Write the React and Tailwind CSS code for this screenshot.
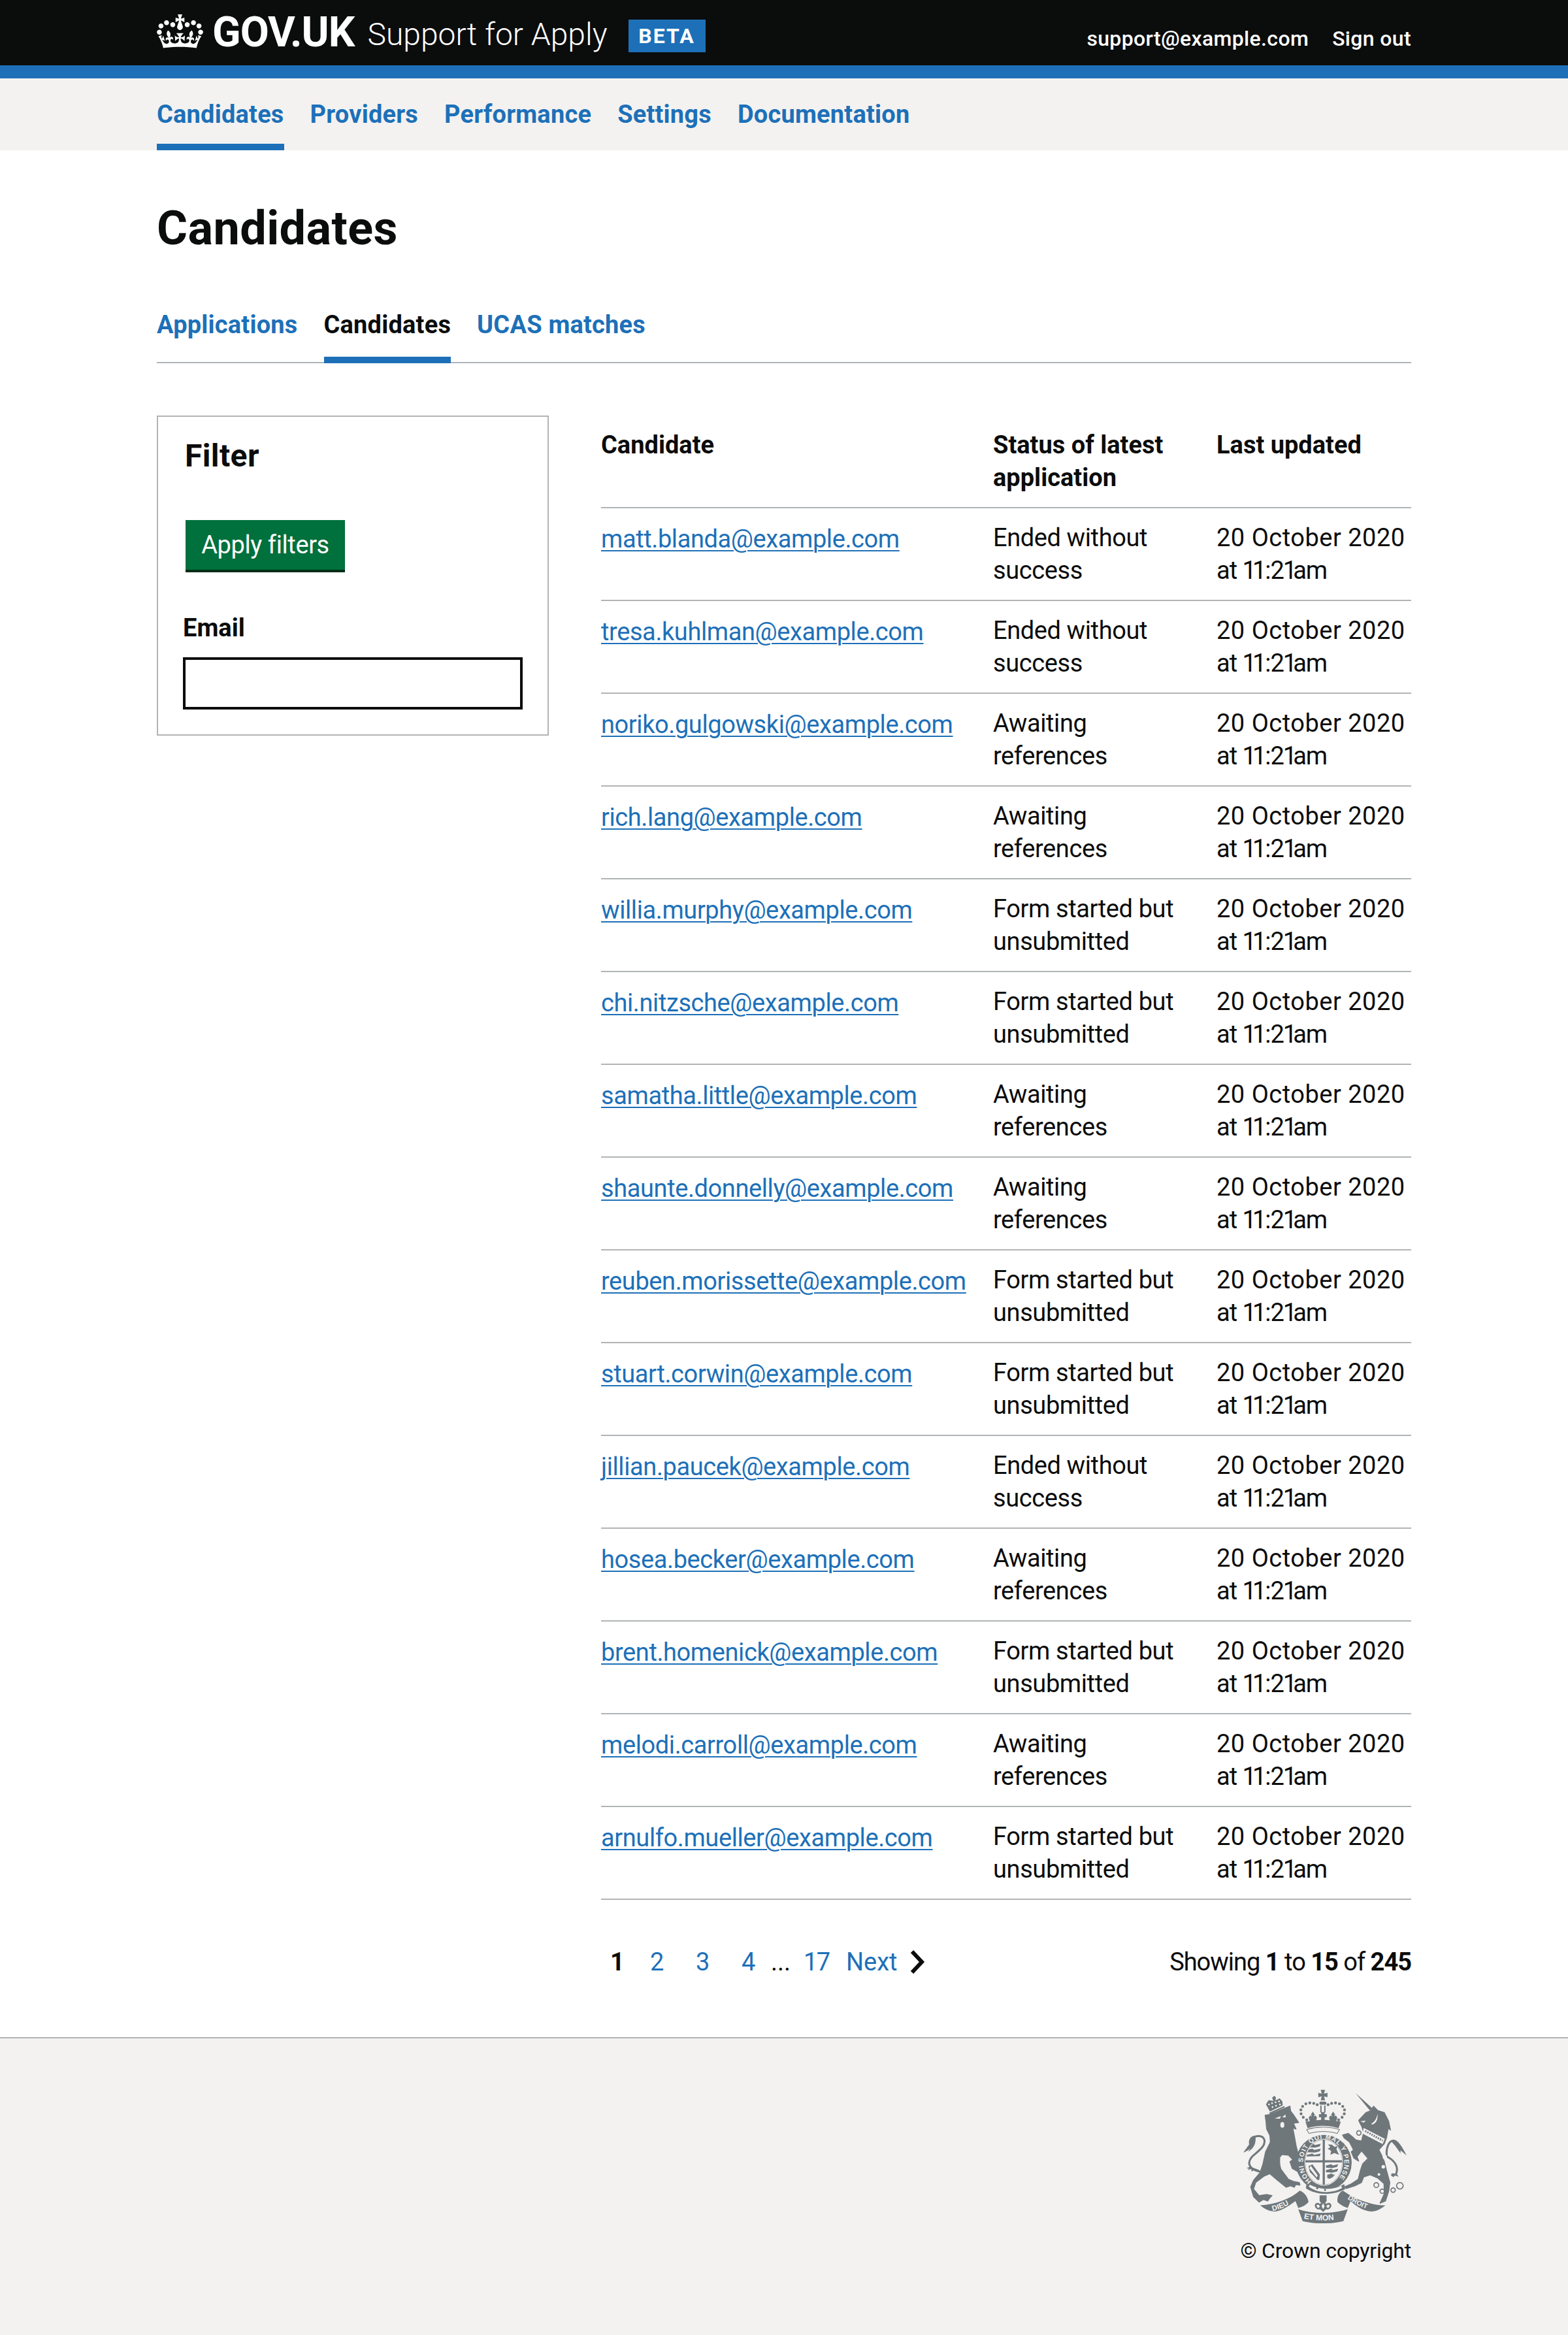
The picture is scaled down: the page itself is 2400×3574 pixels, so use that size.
import React from 'react';

const rows = [
  ['matt.blanda@example.com', 'Ended without', 'success'],
  ['tresa.kuhlman@example.com', 'Ended without', 'success'],
  ['noriko.gulgowski@example.com', 'Awaiting', 'references'],
  ['rich.lang@example.com', 'Awaiting', 'references'],
  ['willia.murphy@example.com', 'Form started but', 'unsubmitted'],
  ['chi.nitzsche@example.com', 'Form started but', 'unsubmitted'],
  ['samatha.little@example.com', 'Awaiting', 'references'],
  ['shaunte.donnelly@example.com', 'Awaiting', 'references'],
  ['reuben.morissette@example.com', 'Form started but', 'unsubmitted'],
  ['stuart.corwin@example.com', 'Form started but', 'unsubmitted'],
  ['jillian.paucek@example.com', 'Ended without', 'success'],
  ['hosea.becker@example.com', 'Awaiting', 'references'],
  ['brent.homenick@example.com', 'Form started but', 'unsubmitted'],
  ['melodi.carroll@example.com', 'Awaiting', 'references'],
  ['arnulfo.mueller@example.com', 'Form started but', 'unsubmitted'],
];

const CrownLogo = () => (
  <svg viewBox="0 0 132 97" className="w-[71px] h-[52px] mb-[4px] fill-white shrink-0" aria-hidden="true">
    <path fillRule="evenodd" d="M25 30.2c3.5 1.5 7.7-.2 9.1-3.7 1.5-3.6-.2-7.8-3.9-9.2-3.6-1.4-7.6.3-9.1 3.9-1.4 3.5.3 7.5 3.9 9zM9 39.5c3.6 1.5 7.8-.2 9.2-3.7 1.5-3.6-.2-7.8-3.9-9.1-3.6-1.5-7.6.2-9.1 3.8-1.4 3.5.3 7.5 3.8 9zM4.4 57.2c3.5 1.5 7.7-.2 9.1-3.8 1.5-3.6-.2-7.7-3.9-9.1-3.5-1.5-7.6.3-9.1 3.8-1.4 3.5.3 7.6 3.9 9.1zm38.3-21.4c3.5 1.5 7.7-.2 9.1-3.8 1.5-3.6-.2-7.7-3.9-9.1-3.6-1.5-7.6.3-9.1 3.8-1.3 3.6.4 7.7 3.9 9.1zm64.4-5.6c-3.6 1.5-7.8-.2-9.1-3.7-1.5-3.6.2-7.8 3.8-9.2 3.6-1.4 7.7.3 9.2 3.9 1.3 3.5-.4 7.5-3.9 9zm15.9 9.3c-3.6 1.5-7.7-.2-9.1-3.7-1.5-3.6.2-7.8 3.7-9.1 3.6-1.5 7.7.2 9.2 3.8 1.5 3.5-.3 7.5-3.8 9zm4.7 17.7c-3.6 1.5-7.8-.2-9.2-3.8-1.5-3.6.2-7.7 3.9-9.1 3.6-1.5 7.7.3 9.2 3.8 1.3 3.5-.4 7.6-3.9 9.1zM89.3 35.8c-3.6 1.5-7.8-.2-9.2-3.8-1.4-3.6.2-7.7 3.9-9.1 3.6-1.5 7.7.3 9.2 3.8 1.4 3.6-.3 7.7-3.9 9.1zM69.7 17.7l8.9 4.7V9.3l-8.9 2.8c-.2-.3-.5-.6-.9-.9L72.4 0H59.6l3.5 11.2c-.3.3-.6.5-.9.9l-8.8-2.8v13.1l8.8-4.7c.3.3.6.7.9.9l-5 15.4v.1c-.2.8-.4 1.6-.4 2.4 0 4.1 3.1 7.5 7 8.1h.2c.3 0 .7.1 1 .1.4 0 .7 0 1-.1h.2c4-.6 7.1-4.1 7.1-8.1 0-.8-.1-1.7-.4-2.4V34l-5.1-15.4c.4-.2.7-.6 1-.9zM66 92.8c16.9 0 32.8 1.1 47.1 3.2 4-16.9 8.9-26.7 14-33.5l-9.6-3.4c1 4.9 1.1 7.2 0 10.2-1.5-1.4-3-4.3-4.2-8.7L108.6 76c2.8-2 5-3.2 7.5-3.3-4.4 9.4-10 11.9-13.6 11.2-4.3-.8-6.3-4.6-5.6-7.9 1-4.7 5.7-5.9 8-.5 4.3-8.7-3-11.4-7.6-8.8 7.1-7.2 7.9-13.5 2.1-21.1-8 6.1-8.1 12.3-4.5 20.8-4.7-5.4-12.1-2.5-9.5 6.2 3.4-5.2 7.9-2 7.2 3.1-.6 4.3-6.4 7.8-13.5 7.2-10.3-.9-10.9-8-11.2-13.8 2.5-.5 7.1 1.8 11 7.3L80.2 60c-4.1 4.4-8 5.3-12.3 5.4 1.4-4.4 8-11.6 8-11.6H55.5s6.4 7.2 7.9 11.6c-4.2-.1-8-1-12.3-5.4l1.4 16.4c3.9-5.5 8.5-7.7 10.9-7.3-.3 5.8-.9 12.8-11.1 13.8-7.2.6-12.9-2.9-13.5-7.2-.7-5 3.8-8.3 7.1-3.1 2.7-8.7-4.6-11.6-9.4-6.2 3.7-8.5 3.6-14.7-4.6-20.8-5.8 7.6-5 13.9 2.2 21.1-4.7-2.6-11.9.1-7.7 8.8 2.3-5.5 7.1-4.2 8.1.5.7 3.3-1.3 7.1-5.7 7.9-3.5.7-9-1.8-13.5-11.2 2.5.1 4.7 1.3 7.5 3.3l-4.7-15.4c-1.2 4.4-2.7 7.2-4.3 8.7-1.1-3-.9-5.3 0-10.2l-9.5 3.4c5 6.9 9.9 16.7 14 33.5 14.8-2.1 30.8-3.2 47.7-3.2z" />
  </svg>
);

const Crest = () => {
  const grey = '#6f777b';
  const bg = '#f3f2f1';
  const crownDots = [[424, 228], [408, 216], [398, 200], [397, 182], [405, 166], [420, 154], [438, 150], [456, 152], [472, 158], [522, 158], [538, 152], [556, 150], [574, 154], [589, 166], [597, 182], [596, 200], [586, 216], [570, 228]];
  return (
    <svg viewBox="130 88 752 614" className="w-[251px] h-[205px] mr-[7px]" role="img" aria-label="Royal coat of arms">
      <defs>
        <clipPath id="shield"><ellipse cx="502" cy="422" rx="84" ry="103" /></clipPath>
        <path id="garter" d="M446 509A95 108 0 1 1 558 509" />
        <path id="dieu" d="M268 646C310 636 350 616 384 582" />
        <path id="droit" d="M610 590C648 616 690 638 738 646" />
        <path id="etmon" d="M410 680Q498 698 588 680" />
      </defs>
      <g fill={grey}>
        {/* top crown */}
        <path d="M488 90h20l-5 18 16-4v20l-16-4 5 18h-20l5-18-16 4v-20l16 4z" />
        <rect x="482" y="144" width="32" height="14" rx="6" />
        <rect x="486" y="162" width="6" height="32" />
        <rect x="504" y="162" width="6" height="32" />
        {crownDots.map(([x, y]) => <circle key={`${x}-${y}`} cx={x} cy={y} r="6.5" />)}
        <path d="M452 190l9 14-5 8 9-4 6 10-6 18h-26l-6-18 6-10 9 4-5-8z" />
        <path d="M545 190l9 14-5 8 9-4 6 10-6 18h-26l-6-18 6-10 9 4-5-8z" />
        <path d="M490 192h16v10h10v14h-10v14h-16v-14h-10v-14h10z" />
        <path d="M418 236C450 232 470 228 498 228C526 228 550 232 580 236L570 266Q498 244 428 266Z" />
        <path d="M424 272Q498 250 574 272L564 290Q498 272 434 290Z" fill={bg} stroke={grey} strokeWidth="3" />

        {/* lion, tail and crown */}
        <g transform="translate(105 75)">
          <path d="M150 115L132 82l12-20 22 4-6-14 10-10 8 8-3 14 20-10 12 14 2 18z" />
          <path d="M146 121l70-32 2 6-68 32z" />
          <g fill={bg}>
            <circle cx="146" cy="82" r="4" /><circle cx="160" cy="76" r="4" /><circle cx="176" cy="72" r="4" /><circle cx="192" cy="68" r="4" /><circle cx="162" cy="94" r="4" /><circle cx="178" cy="88" r="4" /><circle cx="196" cy="82" r="4" />
          </g>
          <path d="M128 132L150 128L242 90L245 112L262 135L282 165L258 168L270 195L255 190L262 225L270 270L285 330L302 352L298 380L280 392L252 375L242 345L255 335L235 315L205 312L195 325C195 345 192 370 205 385L235 425L258 435L285 440L288 452L268 450L262 462L245 455L225 462L185 430L150 400L125 410L85 440L75 470L100 500L135 495L160 500L150 510L140 525L120 518L100 530L75 505L62 460L75 430L105 395L118 355L130 300L152 255L150 225L135 195L132 160Z" stroke={grey} strokeWidth="4" strokeLinejoin="round" />
          <path d="M172 146l28-10-4 12zM222 128l-16 12 16 2z" fill={bg} />
          <ellipse cx="207" cy="176" rx="9" ry="13" fill={bg} />
          <path d="M245 275l58 62-4 4-58-60z" />
          <path d="M118 392C60 386 38 355 70 320C95 296 130 276 125 246C120 222 86 222 68 238" fill="none" stroke={grey} strokeWidth="9" />
          <path d="M84 226C62 224 50 245 55 265L28 303C44 296 52 292 60 284L50 300C70 285 88 270 84 226Z" />
          <path d="M60 368l-18 6 12 2-6 8 16-6 2 12 14-8 16 8 4-8z" />
        </g>

        {/* unicorn, tail and collar */}
        <g transform="translate(480 75)">
          <path d="M168 30L245 100L235 112Z" />
          <path d="M182 155L215 120L240 110L250 90L270 110L300 120L320 160L328 200L318 190L310 235L300 262L275 290L290 320L300 345L310 385L325 440L320 480L305 525L280 535L300 490L298 445L270 420L235 405L205 415L195 440L165 455L125 468L118 460L145 448L180 425L190 385L200 355L225 330L195 295L175 322L182 342L160 328L148 300L158 290L140 255L115 235L108 222L135 215L155 232L170 245L195 250L205 210L195 180L190 172Z" stroke={grey} strokeWidth="4" strokeLinejoin="round" />
          <path d="M205 190L302 240L292 264L200 216Z" fill={bg} />
          <path d="M212 204L292 248" fill="none" stroke={grey} strokeWidth="9" strokeDasharray="6 5" />
          <path d="M240 170C258 160 265 145 268 125C272 150 262 170 243 175Z" fill={bg} />
          <path d="M190 160l24-4-8 10z" fill={bg} />
          <path d="M312 322C305 285 320 245 345 248" fill="none" stroke={grey} strokeWidth="9" />
          <path d="M338 244C365 242 385 285 402 316L374 292L374 306L348 270C338 256 330 256 338 244Z" />
          <path d="M305 318C345 335 372 370 350 408" fill="none" stroke={grey} strokeWidth="9" />
          <path d="M356 400l10 14-18-6-6 8-12-8 4-10z" />
        </g>

        {/* garter and shield */}
        <circle cx="502" cy="425" r="128" />
        <ellipse cx="502" cy="422" rx="88" ry="107" fill={bg} />
        <ellipse cx="502" cy="422" rx="85" ry="104" />
        <g clipPath="url(#shield)">
          <g fill={bg}>
            <rect x="410" y="310" width="87" height="103" /><rect x="507" y="310" width="87" height="103" />
            <rect x="410" y="423" width="87" height="110" /><rect x="507" y="423" width="87" height="110" />
          </g>
          <g fill={grey}>
            <path d="M430 345l24-8 8 6 26-6-4 12-22 6-32-2zM424 366l26-6 8 6 30-6-4 12-22 6-38-2zM424 388l26-6 8 6 30-6-4 12-60 2z" />
            <path d="M522 340l18 2 12 10 14-6-6 16 12 26-22-8-18 8 4-18-16-10 12-6z" />
            <path d="M512 437l24-6 8 6 24-6-4 12-22 6-30-2zM512 458l24-6 8 6 24-6-4 12-22 6-30-2zM518 480l20-6 8 6 8-2-10 12-16 8-10-4z" />
            <path d="M432 440l18-8 34 46-2 24-8 2-36-38z" />
          </g>
          <path d="M442 438l32 44-4 10-34-42z" fill={bg} />
        </g>

        {/* scroll under the shield */}
        <path d="M424 512C470 552 540 556 596 522L600 546C540 576 470 574 420 542Z" />
        <path d="M436 530C476 552 536 556 584 536C536 562 474 560 436 530Z" fill={bg} stroke={bg} strokeWidth="10" />
        <circle cx="472" cy="541" r="5" /><circle cx="508" cy="549" r="5" />

        {/* fleur-de-lis */}
        <path d="M483 574h32v26l-6 8h-20l-6-8z" />
        <path d="M499 596l14 18c8-8 22-8 24 6 0 14-14 22-24 18l-14 12-14-12c-10 4-24-4-24-18 2-14 16-14 24-6z" />
        <path d="M499 610l7 14-7 14-7-14zM470 618c6-4 12 0 14 8l-6 6c-6 0-10-8-8-14zM528 618c-6-4-12 0-14 8l6 6c6 0 10-8 8-14z" fill={bg} />

        {/* motto ribbons */}
        <path d="M210 620C280 615 350 590 392 552C415 560 430 585 432 605C420 620 400 628 385 632L372 600C340 625 300 648 275 648C250 648 225 632 210 620Z" />
        <path d="M785 620C720 620 640 590 590 552C570 560 562 585 565 605C580 620 600 628 612 632L625 600C650 625 690 648 725 648C745 648 770 632 785 620Z" />
        <path d="M385 638C450 660 545 660 612 638L592 692C530 706 465 706 405 692Z" />
      </g>
      <g fill="none" stroke={grey} strokeWidth="5">
        <circle cx="663" cy="288" r="10" />
        <circle cx="652" cy="373" r="10" />
        <circle cx="743" cy="527" r="11" />
        <circle cx="770" cy="555" r="10" />
        <circle cx="820" cy="550" r="10" />
        <circle cx="851" cy="530" r="15" />
      </g>
      <g fill={bg}>
        <circle cx="782" cy="398" r="10" />
        <circle cx="775" cy="443" r="8" />
        <circle cx="755" cy="478" r="6" />
      </g>
      <g fill={bg} fontFamily="'Liberation Sans', sans-serif" fontWeight="700">
        <text fontSize="30"><textPath href="#garter" textLength="495">HONI SOIT QUI MAL Y PENSE</textPath></text>
        <text fontSize="34"><textPath href="#dieu">DIEU</textPath></text>
        <text fontSize="32"><textPath href="#droit">DROIT</textPath></text>
        <text fontSize="36"><textPath href="#etmon">ET MON</textPath></text>
      </g>
    </svg>
  );
};

// the reference font sets its ones very narrow, so the digits get their own spacing
const UpdatedAt = () => (
  <>
    <span className="tracking-[-1px]">at </span>
    <span className="tracking-[-6px]">1</span>
    <span className="tracking-[-2px]">1</span>
    <span className="tracking-[-1px]">:</span>
    <span className="tracking-[-2px]">2</span>
    <span className="tracking-[-6px]">1</span>
    <span className="tracking-[-1px]">am</span>
  </>
);

const App = () => {
  return (
    <div className="min-h-screen flex flex-col bg-white text-[#0b0c0c] font-['Roboto',sans-serif] text-[38px] leading-[50px]">
      <header className="bg-[#0b0c0c] border-b-[20px] border-[#1d70b8] h-[120px] text-white">
        <div className="w-[1920px] mx-auto h-[100px] flex items-center justify-between">
          <div className="flex items-center">
            <CrownLogo />
            <span className="ml-[14px] font-bold text-[64px] leading-[60px] tracking-[-1px]">GOV.UK</span>
            <span className="ml-[20px] mt-[6px] text-[48px] leading-[60px] font-light">Support for Apply</span>
            <span className="ml-[32px] w-[118px] h-[50px] mt-[10px] bg-[#1d70b8] font-bold text-[32px] leading-[50px] tracking-[2px] text-center">BETA</span>
          </div>
          <div className="flex items-center gap-[36px] text-[32px] font-medium leading-[40px] mt-[18px] tracking-[0.35px]">
            <span>support@example.com</span>
            <span>Sign out</span>
          </div>
        </div>
      </header>

      <nav className="bg-[#f3f2f1] h-[110px]">
        <ul className="w-[1920px] mx-auto h-full flex gap-[40px] font-bold text-[#1d70b8] tracking-[0.2px]">
          {['Candidates', 'Providers', 'Performance', 'Settings', 'Documentation'].map((item, i) => (
            <li key={item} className={i === 0 ? 'h-full pt-[30px] border-b-[10px] border-[#1d70b8]' : 'h-full pt-[30px]'}>{item}</li>
          ))}
        </ul>
      </nav>

      <main className="w-[1920px] mx-auto">
        <h1 className="mt-[80px] font-bold text-[72px] leading-[80px] tracking-[0.4px]">Candidates</h1>

        <div className="mt-[50px] h-[116px] border-b-2 border-[#b1b4b6] flex gap-[40px] font-bold tracking-[0.2px]">
          <a className="text-[#1d70b8] pt-[32px]">Applications</a>
          <a className="h-[116px] pt-[32px] border-b-[10px] border-[#1d70b8]">Candidates</a>
          <a className="text-[#1d70b8] pt-[32px]">UCAS matches</a>
        </div>

        <div className="mt-[80px] flex gap-[80px] items-start">
          <aside className="w-[600px] h-[490px] shrink-0 border-2 border-[#b1b4b6] pl-[38px] pr-[40px]">
            <h2 className="mt-[30px] ml-[3px] font-bold text-[48px] leading-[60px] tracking-[0.4px]">Filter</h2>
            <button className="block mt-[68px] ml-[4px] w-[244px] h-[80px] bg-[#00703c] border-b-4 border-[#002d18] text-white leading-[76px] text-center tracking-[-0.4px]">Apply filters</button>
            <label className="block mt-[60px] font-bold">Email</label>
            <input className="block mt-[20px] w-[520px] h-[80px] border-4 border-[#0b0c0c]" />
          </aside>

          <div className="w-[1240px]">
            <table className="w-full table-fixed border-collapse text-left">
              <colgroup>
                <col className="w-[600px]" />
                <col className="w-[342px]" />
                <col className="w-[298px]" />
              </colgroup>
              <thead>
                <tr className="border-b-2 border-[#b1b4b6] font-bold">
                  <th className="py-[20px] pr-[40px] align-top">Candidate</th>
                  <th className="py-[20px] pr-[40px] align-top">Status of latest<br />application</th>
                  <th className="py-[20px] align-top">Last updated</th>
                </tr>
              </thead>
              <tbody>
                {rows.map(([email, line1, line2]) => (
                  <tr key={email} className="border-b-2 border-[#b1b4b6]">
                    <td className="pt-[22px] pb-[18px] pr-[40px] align-top whitespace-nowrap tracking-[-0.4px]"><a className="text-[#1d70b8] underline underline-offset-[4px] decoration-2">{email}</a></td>
                    <td className="py-[20px] pr-[40px] align-top tracking-[-0.4px]">{line1}<br />{line2}</td>
                    <td className="py-[20px] align-top whitespace-nowrap"><span className="tracking-[0.5px]">20 October 2020</span><br /><UpdatedAt /></td>
                  </tr>
                ))}
              </tbody>
            </table>

            <div className="mt-[70px] flex items-center justify-between">
              <div className="flex items-center">
                <span className="w-[70px] pl-[14px] font-bold">1</span>
                <span className="w-[70px] pl-[5px] text-[#1d70b8]">2</span>
                <span className="w-[70px] pl-[5px] text-[#1d70b8]">3</span>
                <span className="w-[50px] pl-[5px] text-[#1d70b8]">4</span>
                <span className="w-[50px]">...</span>
                <span className="w-[65px] text-[#1d70b8] tracking-[-1.5px]">17</span>
                <span className="text-[#1d70b8]">Next</span>
                <svg viewBox="0 0 24 36" className="ml-[18px] w-[24px] h-[36px]" aria-hidden="true">
                  <path d="M4 2l15 16L4 34" fill="none" stroke="#0b0c0c" strokeWidth="6" />
                </svg>
              </div>
              <p className="tracking-[-1px]">Showing <b>1</b> to <b>15</b> of <b>245</b></p>
            </div>
          </div>
        </div>
      </main>

      <footer className="grow mt-[90px] bg-[#f3f2f1] border-t-2 border-[#b1b4b6]">
        <div className="w-[1920px] mx-auto pt-[78px] flex flex-col items-end">
          <Crest />
          <p className="mt-[22px] text-[32px] leading-[40px] tracking-[-0.2px]">© Crown copyright</p>
        </div>
      </footer>
    </div>
  );
};

export default App;
